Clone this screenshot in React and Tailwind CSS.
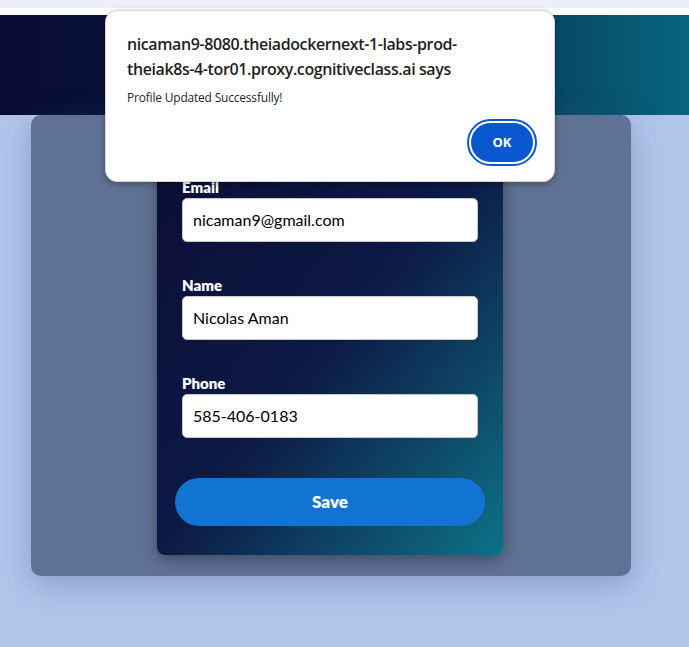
const fields = [
  { label: 'Email', value: 'nicaman9@gmail.com' },
  { label: 'Name', value: 'Nicolas Aman' },
  { label: 'Phone', value: '585-406-0183' },
];

function AlertDialog() {
  return (
    <div className="absolute left-[105px] top-[10px] w-[450px] h-[172px] bg-white rounded-[12px] border border-[#d6d6d6] shadow-[0_2px_6px_rgba(0,0,0,0.3)] font-['Open_Sans','Noto_Sans',sans-serif]">
      <div className="pt-[21px] pl-[21px] pr-6">
        <p className="text-[16px] leading-[25px] font-semibold text-[#1f1f1f] tracking-[-0.4px]">
          nicaman9-8080.theiadockernext-1-labs-prod-
          <br />
          theiak8s-4-tor01.proxy.cognitiveclass.ai says
        </p>
        <p className="mt-[8px] text-[12px] leading-[16px] text-[#1f1f1f] tracking-[-0.2px]">Profile Updated Successfully!</p>
      </div>
      <div className="absolute right-[17px] top-[108px] w-[70px] h-[47px] rounded-full border-2 border-[#0b57d0] p-[2px]">
        <div className="w-full h-full rounded-full bg-[#0b57d0] flex items-center justify-center text-white text-[13px] font-bold">
          OK
        </div>
      </div>
    </div>
  );
}

export default function App() {
  return (
    <div className="relative w-[689px] h-[647px] overflow-hidden bg-[#b1c4ea] font-['Lato',sans-serif]">
      <div className="h-[8px] bg-[#eceff7]" />
      <div className="h-[7px] bg-white" />
      <div className="h-[100px] bg-gradient-to-r from-[#080c33] via-[#081c46] to-[#07657d]" />

      <div className="ml-[31px] w-[600px] h-[461px] bg-[#5f7195] rounded-[10px] shadow-[0_8px_30px_rgba(60,80,120,0.35)] pt-[20px] pl-[126px]">
        <div className="w-[346px] h-[420px] rounded-[8px] bg-gradient-to-br from-[#0b0d35] via-[#0c1a45] to-[#0a7388] shadow-[0_4px_14px_rgba(0,0,0,0.35)] px-[18px] pt-[42px]">
          {fields.map((f) => (
            <div key={f.label} className="px-[7px] mb-[33px]">
              <label className="block text-white font-extrabold text-[15px] leading-[20px]">{f.label}</label>
              <div className="mt-[1px] h-[44px] bg-white rounded-[5px] border border-[#c8c8c8] flex items-center px-[10px] text-black text-[16px]">
                {f.value}
              </div>
            </div>
          ))}
          <button className="mt-[7px] w-full h-[48px] rounded-full bg-[#1174d3] text-white font-extrabold text-[17px]">
            Save
          </button>
        </div>
      </div>

      <AlertDialog />
    </div>
  );
}
